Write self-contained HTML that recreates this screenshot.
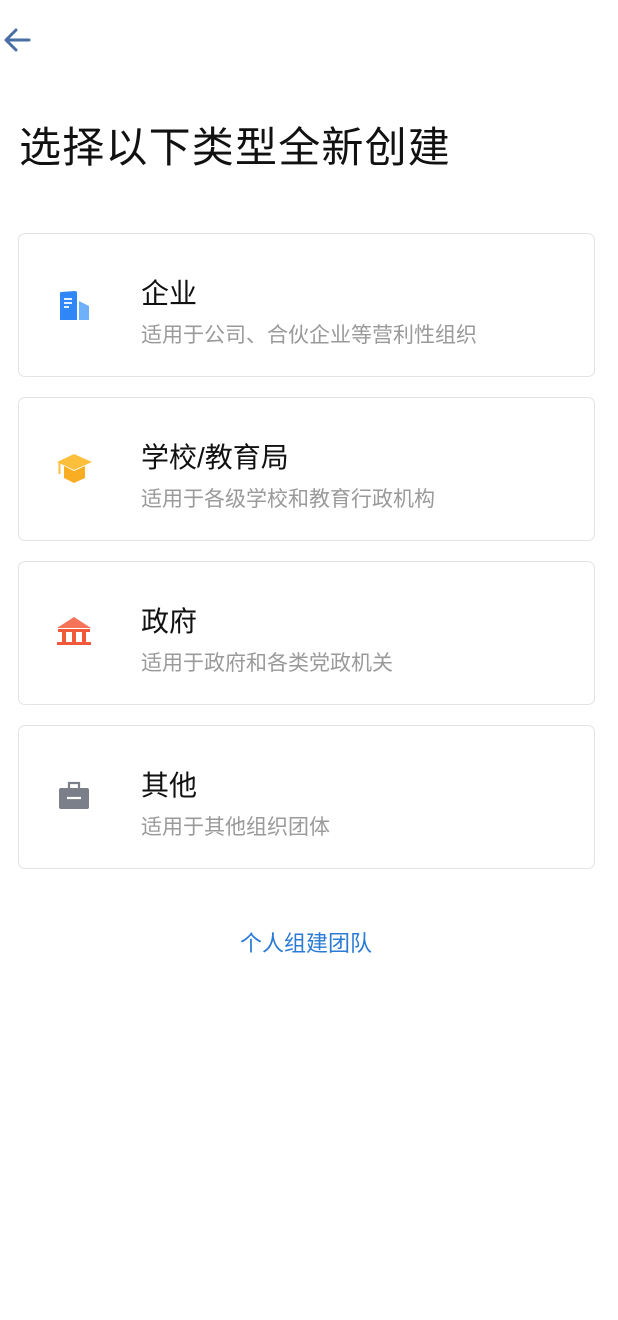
<!DOCTYPE html>
<html><head><meta charset="utf-8"><style>
body{margin:0;width:618px;height:1320px;background:#fff;font-family:"Liberation Sans","Noto Sans CJK SC",sans-serif;position:relative;overflow:hidden}
.h{position:absolute;left:19px;top:114px;font-size:42px;color:#111;letter-spacing:1.2px;white-space:nowrap}
.card{position:absolute;left:18px;width:577px;height:144px;border:1px solid #e3e3e3;border-radius:7px;box-sizing:border-box}
.t{position:absolute;left:122px;top:38px;font-size:28px;color:#111;white-space:nowrap}
.s{position:absolute;left:122px;top:85px;font-size:21px;color:#9a9a9a;white-space:nowrap}
.ic{position:absolute;left:37px;top:53px}
.link{position:absolute;left:0;width:612px;text-align:center;top:926px;font-size:22px;color:#2a7bd5}
</style></head><body>
<svg style="position:absolute;left:3px;top:27px" width="28" height="26" viewBox="0 0 28 26"><path d="M26 13H4M13 3L3 13l10 10" fill="none" stroke="#4a6fa5" stroke-width="3" stroke-linecap="round" stroke-linejoin="round"/></svg>
<div class="h">选择以下类型全新创建</div>

<div class="card" style="top:233px">
<svg class="ic" width="36" height="36" viewBox="0 0 36 36"><path d="M4 6Q4 5 5 5L19 4Q21 4 21 6V33H4Z" fill="#2f86f6"/><path d="M23 14L33 19V33H23Z" fill="#6fb0fb"/><path d="M8 12h8M8 16h8M8 20h5" stroke="#fff" stroke-width="1.8"/></svg>
<div class="t">企业</div><div class="s">适用于公司、合伙企业等营利性组织</div></div>

<div class="card" style="top:397px">
<svg class="ic" width="36" height="36" viewBox="0 0 36 36"><path d="M1 11L18 3L36 11L18 19Z" fill="#fbbf3c"/><path d="M8 15L18 20L29 15V27L18 32L8 27Z" fill="#f8ad22"/><path d="M3.5 12V23" stroke="#fbbf3c" stroke-width="2"/></svg>
<div class="t">学校/教育局</div><div class="s">适用于各级学校和教育行政机构</div></div>

<div class="card" style="top:561px">
<svg class="ic" width="36" height="36" viewBox="0 0 36 36"><path d="M1 13L18 2L35 13Z" fill="#f6735a"/><rect x="2" y="14" width="32" height="3" fill="#f05a3a"/><rect x="6" y="17" width="4" height="11" fill="#f05a3a"/><rect x="16" y="17" width="4" height="11" fill="#f05a3a"/><rect x="26" y="17" width="4" height="11" fill="#f05a3a"/><rect x="1" y="27" width="34" height="3" fill="#f05a3a"/></svg>
<div class="t">政府</div><div class="s">适用于政府和各类党政机关</div></div>

<div class="card" style="top:725px">
<svg class="ic" width="36" height="36" viewBox="0 0 36 36"><path d="M13 10V4H23V10" fill="none" stroke="#7b7f89" stroke-width="2.2"/><rect x="3" y="9" width="30" height="21" rx="2" fill="#7b7f89"/><path d="M11 19H25" stroke="#fff" stroke-width="2.2"/></svg>
<div class="t">其他</div><div class="s">适用于其他组织团体</div></div>

<div class="link">个人组建团队</div>
</body></html>
